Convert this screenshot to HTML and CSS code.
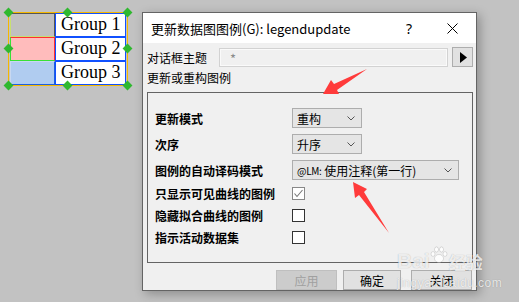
FILE: index.html
```html
<!DOCTYPE html>
<html lang="zh">
<head>
    <meta charset="UTF-8">
    <title>更新数据图图例</title>
    <link rel="stylesheet" href="styles.css">
</head>
<body>
    <div class="desk">
        <!-- legend object on the graph page -->
        <div class="legend">
            <div class="legend-row">
                <span class="swatch s1"></span>
                <span class="legend-label">Group 1</span>
            </div>
            <div class="legend-row">
                <span class="swatch s2"></span>
                <span class="legend-label">Group 2</span>
            </div>
            <div class="legend-row">
                <span class="swatch s3"></span>
                <span class="legend-label">Group 3</span>
            </div>
        </div>
        <span class="handle" style="left:8px;top:12px"></span>
        <span class="handle" style="left:67px;top:12px"></span>
        <span class="handle" style="left:127px;top:12px"></span>
        <span class="handle" style="left:8px;top:48px"></span>
        <span class="handle" style="left:127px;top:48px"></span>
        <span class="handle" style="left:8px;top:85px"></span>
        <span class="handle" style="left:67px;top:85px"></span>
        <span class="handle" style="left:127px;top:85px"></span>

        <div class="dialog">
            <div class="titlebar">
                <span class="title">更新数据图图例(G): legendupdate</span>
                <span class="help">?</span>
                <svg class="close" width="11" height="11" viewBox="0 0 11 11">
                    <path d="M0.5 0.5 L10.5 10.5 M10.5 0.5 L0.5 10.5" stroke="#000" stroke-width="1"/>
                </svg>
            </div>

            <div class="dlg-body">
                <div class="theme-row">
                    <span class="theme-label">对话框主题</span>
                    <div class="theme-input">*</div>
                    <button class="theme-btn">
                        <svg width="7" height="11" viewBox="0 0 7 11"><path d="M0 0 L7 5.5 L0 11 Z" fill="#000"/></svg>
                    </button>
                </div>

                <div class="section-label">更新或重构图例</div>

                <div class="group">
                    <div class="rows selects">
                        <div class="row">
                            <span class="lbl">更新模式</span>
                            <div class="select w-sm">重构<svg class="chev" width="8" height="5" viewBox="0 0 8 5"><polyline points="0.5,0.5 4,4 7.5,0.5" fill="none" stroke="#555"/></svg></div>
                        </div>
                        <div class="row">
                            <span class="lbl">次序</span>
                            <div class="select w-sm">升序<svg class="chev" width="8" height="5" viewBox="0 0 8 5"><polyline points="0.5,0.5 4,4 7.5,0.5" fill="none" stroke="#555"/></svg></div>
                        </div>
                        <div class="row">
                            <span class="lbl">图例的自动译码模式</span>
                            <div class="select w-lg"><span class="lm">@LM:</span>&nbsp;使用注释(第一行)<svg class="chev" width="8" height="5" viewBox="0 0 8 5"><polyline points="0.5,0.5 4,4 7.5,0.5" fill="none" stroke="#555"/></svg></div>
                        </div>
                    </div>
                    <div class="rows checks">
                        <div class="row">
                            <span class="lbl">只显示可见曲线的图例</span>
                            <span class="check on">
                                <svg width="11" height="11" viewBox="0 0 11 11"><polyline points="1.5,5.5 4,8.5 9.5,2" fill="none" stroke="#777" stroke-width="1.1"/></svg>
                            </span>
                        </div>
                        <div class="row">
                            <span class="lbl">隐藏拟合曲线的图例</span>
                            <span class="check"></span>
                        </div>
                        <div class="row">
                            <span class="lbl">指示活动数据集</span>
                            <span class="check"></span>
                        </div>
                    </div>
                </div>

                <div class="buttons">
                    <button class="btn disabled">应用</button>
                    <button class="btn ok">确定</button>
                    <button class="btn close-btn">关闭</button>
                </div>
            </div>
        </div>

        <!-- red annotation arrows -->
        <svg class="arrows" width="519" height="302" viewBox="0 0 519 302">
            <polygon points="367,69 337,90 339,94 323,94 331,80 334,84" fill="#ff3b3b"/>
            <polygon points="389,233 364,192 367,189 353,182 355,198 359,195" fill="#ff3b3b"/>
        </svg>

        <div class="watermark">
            <div class="wm-main">Bai<svg class="paw" width="18" height="18" viewBox="0 0 18 18">
                <ellipse cx="9" cy="12.5" rx="4.5" ry="4" fill="rgba(255,255,255,0.85)" stroke="rgba(0,0,0,0.2)" stroke-width="0.6"/>
                <ellipse cx="3" cy="8" rx="2" ry="2.4" fill="rgba(255,255,255,0.85)" stroke="rgba(0,0,0,0.2)" stroke-width="0.6"/>
                <ellipse cx="6.5" cy="3.5" rx="2" ry="2.6" fill="rgba(255,255,255,0.85)" stroke="rgba(0,0,0,0.2)" stroke-width="0.6"/>
                <ellipse cx="11.5" cy="3.5" rx="2" ry="2.6" fill="rgba(255,255,255,0.85)" stroke="rgba(0,0,0,0.2)" stroke-width="0.6"/>
                <ellipse cx="15" cy="8" rx="2" ry="2.4" fill="rgba(255,255,255,0.85)" stroke="rgba(0,0,0,0.2)" stroke-width="0.6"/>
            </svg><span class="wm-cn">经验</span></div>
            <div class="wm-sub">jingyan.baidu.com</div>
        </div>
    </div>
</body>
</html>
```

FILE: styles.css
```css
* {
    margin: 0;
    padding: 0;
    box-sizing: border-box;
}

body {
    margin: 0;
    background-color: #c2c2c2;
    font-family: "Noto Sans CJK SC", sans-serif;
}

.desk {
    position: relative;
    width: 519px;
    height: 302px;
    overflow: hidden;
}

/* legend */
.legend {
    position: absolute;
    left: 8px;
    top: 12px;
    width: 120px;
    height: 74px;
    border: 1px solid #f5b800;
    padding: 0 1px 0 1px;
    display: flex;
    flex-direction: column;
}

.legend-row {
    display: flex;
    height: 24px;
}

.swatch {
    width: 45px;
    height: 100%;
    border: 1px solid;
}

.swatch.s1 {
    background-color: #c0c0c0;
    border-color: #555 #555 #c8e070 #c8e070;
}

.swatch.s2 {
    background-color: #ffbcbc;
    border-color: #ff3030 #ff3030 #38e038 #38e038;
}

.swatch.s3 {
    background-color: #b0ccf0;
    border-color: #c8d8f0 #2060e0 #2060e0 #c8d8f0;
}

.legend-label {
    flex: 1;
    background-color: #fff;
    border: 1px solid #1050ff;
    font-family: "Liberation Serif", serif;
    font-size: 18px;
    line-height: 21px;
    padding-left: 5px;
    color: #000;
    white-space: nowrap;
}

.handle {
    position: absolute;
    width: 7px;
    height: 7px;
    margin: -3px 0 0 -3px;
    background-color: #2fb82f;
    transform: rotate(45deg);
}

/* dialog window */
.dialog {
    position: absolute;
    left: 142px;
    top: 12px;
    width: 335px;
    height: 279px;
    border: 1px solid #646464;
    background-color: #f0f0f0;
    box-shadow: 3px 3px 10px rgba(0, 0, 0, 0.28);
    overflow: hidden;
}

.titlebar {
    height: 30px;
    background-color: #fff;
    display: flex;
    align-items: center;
    padding-left: 8px;
    font-size: 13px;
    color: #000;
}

.title {
    flex: 1;
    white-space: nowrap;
}

.help {
    font-family: "Noto Sans", sans-serif;
    font-size: 14px;
    margin-right: 35px;
}

.close {
    margin-right: 18px;
}

.dlg-body {
    padding: 4px 3px 0 4px;
    font-size: 12px;
    color: #000;
}

.theme-row {
    display: flex;
    align-items: center;
    height: 20px;
}

.theme-label {
    width: 72px;
    white-space: nowrap;
}

.theme-input {
    flex: 1;
    height: 19px;
    border: 1px solid #d2d2d2;
    background-color: #f0f0f0;
    box-shadow: inset 0 0 0 1px #fafafa;
    color: #8a8a8a;
    font-size: 13px;
    line-height: 20px;
    padding-left: 10px;
    margin-right: 4px;
}

.theme-btn {
    width: 21px;
    height: 20px;
    background-color: #e1e1e1;
    border: 1px solid #adadad;
    display: flex;
    align-items: center;
    justify-content: center;
    padding-left: 2px;
}

.section-label {
    height: 21px;
    line-height: 21px;
    white-space: nowrap;
}

.group {
    margin-top: 4px;
    height: 171px;
    border: 1px solid #646464;
    padding: 15px 0 0 7px;
}

.rows {
    display: flex;
    flex-direction: column;
}

.rows.selects {
    gap: 6px;
}

.rows.checks {
    margin-top: 3px;
    gap: 2px;
}

.row {
    display: flex;
    align-items: center;
    height: 20px;
}

.lbl {
    width: 137px;
    font-weight: 700;
    white-space: nowrap;
}

.select {
    height: 20px;
    display: flex;
    align-items: center;
    background-color: #e5e5e5;
    border: 1px solid #adadad;
    padding-left: 4px;
    white-space: nowrap;
    position: relative;
}

.select.w-sm {
    width: 70px;
}

.select.w-lg {
    width: 167px;
}

.select .lm {
    font-size: 10px;
    letter-spacing: -0.3px;
}

.chev {
    position: absolute;
    right: 6px;
    top: 7px;
}

.check {
    width: 13px;
    height: 13px;
    border: 1px solid #333;
    background-color: #fff;
    display: flex;
    align-items: center;
    justify-content: center;
}

.check.on {
    border-color: #888;
}

.buttons {
    margin-top: 7px;
    display: flex;
    justify-content: flex-end;
    gap: 6px;
    padding-right: 1px;
}

.btn {
    width: 61px;
    height: 20px;
    background-color: #e1e1e1;
    border: 1px solid #adadad;
    font-family: "Noto Sans CJK SC", sans-serif;
    font-size: 12px;
    color: #000;
}

.btn.ok {
    width: 58px;
}

.btn.close-btn {
    margin-left: 4px;
}

.btn.disabled {
    background-color: #cccccc;
    border-color: #bfbfbf;
    color: #a0a0a0;
}

/* overlays */
.arrows {
    position: absolute;
    left: 0;
    top: 0;
    pointer-events: none;
}

.watermark {
    position: absolute;
    left: 397px;
    top: 246px;
    color: rgba(255, 255, 255, 0.8);
    text-shadow: 0 0 1px rgba(0, 0, 0, 0.3);
    pointer-events: none;
}

.wm-main {
    display: flex;
    align-items: flex-end;
    font-family: "Liberation Sans", sans-serif;
    font-size: 21px;
    font-weight: 700;
    line-height: 30px;
    white-space: nowrap;
}

.paw {
    margin: 0 1px 12px 0;
}

.wm-cn {
    font-family: "Noto Sans CJK SC", sans-serif;
    font-size: 17px;
    line-height: 28px;
}

.wm-sub {
    font-family: "Liberation Sans", sans-serif;
    font-size: 12px;
    line-height: 14px;
    letter-spacing: 0.5px;
}
```
